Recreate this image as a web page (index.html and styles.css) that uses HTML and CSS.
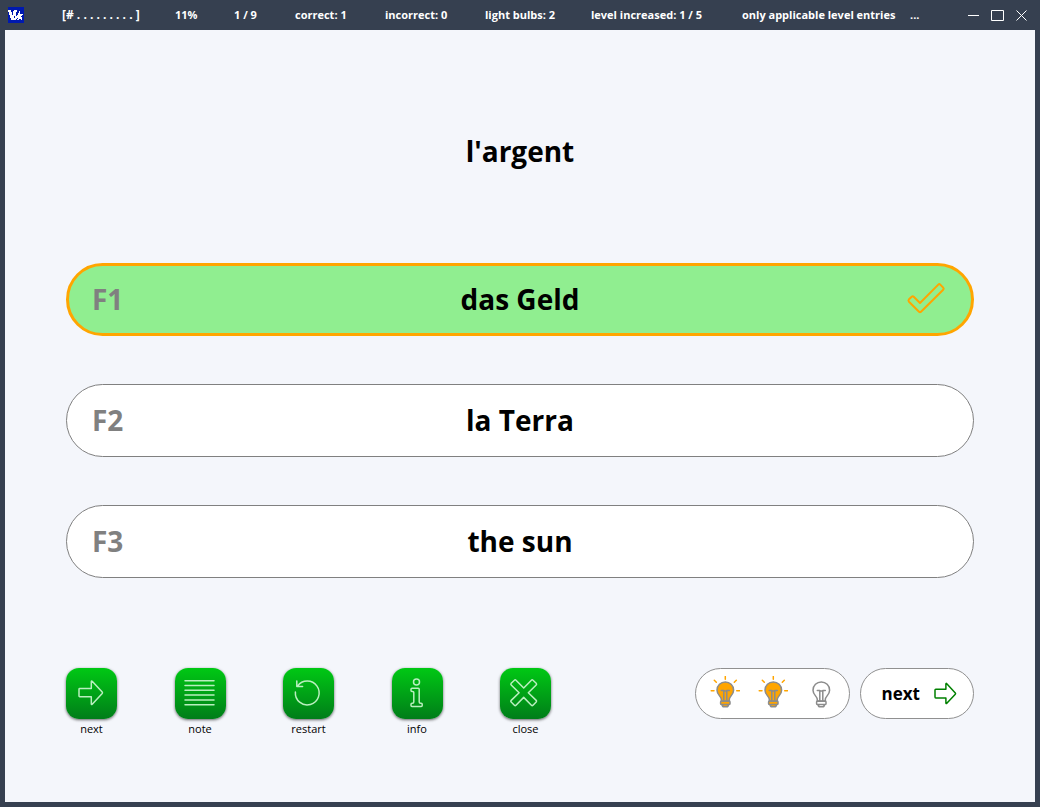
FILE: index.html
```html
<!DOCTYPE html>
<html lang="en">
<head>
<meta charset="utf-8">
<title>Vocabulary quiz</title>
<link rel="stylesheet" href="styles.css">
</head>
<body>
<div class="window">
  <header class="titlebar">
    <svg class="app-icon" viewBox="0 0 16 16" aria-hidden="true">
      <rect width="16" height="16" fill="#0019b0"/>
      <path fill="#fff" d="M0 3h3v2h1v3h1V4h1V3h3v2H8v3h2V6h1V4h1v3h3v1h-1v1h-1v1h1v3h-1v-1h-2v1H9v-1H8v1H3v-2H2V8H1V5H0z"/>
      <path fill="#0019b0" d="M6 9h1v2H6zM8 8h1v1H8zM9 11h1v1H9z"/>
    </svg>
    <div class="status">
      <span class="progress">[# . . . . . . . . . ]</span>
      <span>11%</span>
      <span>1 / 9</span>
      <span>correct: 1</span>
      <span>incorrect: 0</span>
      <span>light bulbs: 2</span>
      <span>level increased: 1 / 5</span>
      <span>only applicable level entries</span>
      <span>...</span>
    </div>
    <div class="controls">
      <button class="control" type="button" aria-label="Minimize"><svg viewBox="0 0 14 14"><path d="M1 7.500h11"/></svg></button>
      <button class="control" type="button" aria-label="Maximize"><svg viewBox="0 0 14 14"><path d="M.5 2.500h12v10H.5z"/></svg></button>
      <button class="control" type="button" aria-label="Close window"><svg viewBox="0 0 14 14"><path d="M1.500 2.500l10 10M11.500 2.500l-10 10"/></svg></button>
    </div>
  </header>

  <main class="quiz">
    <h1 class="prompt">l'argent</h1>

    <div class="answers">
      <button class="answer correct" type="button">
        <span class="key">F1</span>
        <span class="word">das Geld</span>
        <svg class="check" viewBox="0 0 44 40" aria-hidden="true"><path d="M5 20.300L7.700 17.700Q8.700 16.800 9.700 17.700L16 24L34.300 5.600Q35.300 4.600 36.300 5.600L39.200 8.600Q40.200 9.700 39.200 10.700L17 32.700Q16 33.600 15 32.700L5 22.700Q3.900 21.500 5 20.300z"/></svg>
      </button>
      <button class="answer" type="button">
        <span class="key">F2</span>
        <span class="word">la Terra</span>
      </button>
      <button class="answer" type="button">
        <span class="key">F3</span>
        <span class="word">the sun</span>
      </button>
    </div>

    <footer class="footer">
      <div class="tools">
        <button class="tool" type="button">
          <svg class="tile" viewBox="0 0 51 51"><path d="M13 21.200Q13 20.500 13.700 20.500H25.300V13.600Q25.300 12.400 26.200 13.300L36.200 24.100Q36.800 24.800 36.200 25.500L26.200 36.200Q25.300 37 25.300 36V28.700H13.700Q13 28.700 13 28z"/></svg>
          <span>next</span>
        </button>
        <button class="tool" type="button">
          <svg class="tile" viewBox="0 0 51 51"><path d="M10 12.700h29M10 17.500h29M10 22.300h29M10 27.100h29M10 31.900h29M10 36.700h29"/></svg>
          <span>note</span>
        </button>
        <button class="tool" type="button">
          <svg class="tile" viewBox="0 0 51 51"><path d="M12.400 24A11.900 11.900 0 1 0 14.500 18.200M13.800 12.900V18.600H19.600"/></svg>
          <span>restart</span>
        </button>
        <button class="tool" type="button">
          <svg class="tile" viewBox="0 0 51 51"><circle cx="24.500" cy="14" r="3"/><path d="M20 20.300H26.200Q27.200 20.300 27.200 21.300V34Q27.200 35.200 28.500 35.200H29.200Q30.200 35.200 30.200 36.200V37.500Q30.200 38.500 29.200 38.500H20Q19 38.500 19 37.500V36.200Q19 35.200 20 35.200H20.500Q21.800 35.200 21.800 34V24.600Q21.800 23.500 20.700 23.500H20Q19 23.500 19 22.500V21.300Q19 20.300 20 20.300z"/></svg>
          <span>info</span>
        </button>
        <button class="tool" type="button">
          <svg class="tile" viewBox="0 0 51 51"><path d="M14.400 12.200Q15.200 11.400 16 12.200L23.700 20L31.400 12.200Q32.200 11.400 33 12.200L36.200 15.300Q37 16.200 36.200 17L28.300 24.700L36.200 32.400Q37 33.200 36.200 34L33 37.200Q32.200 38 31.400 37.200L23.700 29.400L16 37.200Q15.200 38 14.400 37.200L11.200 34Q10.400 33.200 11.200 32.400L19.100 24.700L11.200 17Q10.400 16.200 11.200 15.300z"/></svg>
          <span>close</span>
        </button>
      </div>

      <div class="actions">
        <div class="bulbs" role="img" aria-label="2 of 3 light bulbs">
          <svg class="bulb lit" viewBox="0 0 30 32"><use href="#rays"/><use href="#bulb"/></svg>
          <svg class="bulb lit" viewBox="0 0 30 32"><use href="#rays"/><use href="#bulb"/></svg>
          <svg class="bulb" viewBox="0 0 30 32"><use href="#bulb"/></svg>
        </div>
        <button class="next" type="button">
          <span>next</span>
          <svg viewBox="0 0 23 23" aria-hidden="true"><path d="M1 8Q1 7.200 1.800 7.200H11.900V2Q11.900.9 12.800 1.700L21.300 10.900Q21.900 11.600 21.300 12.200L12.800 21.300Q11.900 22 11.900 21V15.900H1.800Q1 15.900 1 15.100z"/></svg>
        </button>
      </div>
    </footer>
  </main>
</div>

<svg class="defs" width="0" height="0" aria-hidden="true">
  <defs>
    <g id="rays"><path class="ray" d="M15.300.5v2.800M1.200 14.700h2.800M26.700 14.700h2.800M4.300 4.200l2 2M26.300 4.200l-2 2"/></g>
    <g id="bulb">
      <path d="M11.300 25V23.400C11.300 20.300 7 19 7 14.200A8.300 8.300 0 0 1 23.600 14.200C23.600 19 19.300 20.300 19.300 23.400V25z"/>
      <path fill="none" d="M13.800 25V14.800M16.800 25V14.800M11.300 14.600H13.800Q15.300 15.600 16.800 14.600H19.300"/>
      <path d="M11.200 25.300H19.400Q20 25.300 20 26V27.800Q20 28.400 19.400 28.400H11.200Q10.600 28.400 10.600 27.800V26Q10.600 25.300 11.200 25.300zM12 28.500Q12.400 30.800 14 30.800H16.600Q18.200 30.800 18.600 28.500"/>
    </g>
  </defs>
</svg>
</body>
</html>
```

FILE: styles.css
```css
* {
  box-sizing: border-box;
}

body {
  margin: 0;
  font-family: "Open Sans", "Noto Sans", sans-serif;
  color: #000;
}

button {
  font: inherit;
  color: inherit;
  border: 0;
  padding: 0;
  background: none;
  cursor: pointer;
}

svg {
  display: block;
  fill: none;
  stroke-linecap: round;
  stroke-linejoin: round;
}

.defs {
  position: absolute;
}

.window {
  display: flex;
  flex-direction: column;
  min-height: 100vh;
  padding: 0 5px 5px;
  background: #364050;
}

.titlebar {
  display: flex;
  align-items: center;
  height: 30px;
  padding: 0 6px 0 3px;
  color: #fff;
}

.app-icon {
  width: 16px;
  height: 16px;
  margin-right: 38px;
  shape-rendering: crispEdges;
}

.status {
  display: grid;
  flex: 1;
  grid-template-columns: 113px 59px 61px 90px 100px 106px 151px 168px 1fr;
  min-width: 0;
  overflow: hidden;
  font-size: 11px;
  font-weight: 700;
  line-height: 16px;
  white-space: nowrap;
}

.progress {
  font-size: 12px;
}

.controls {
  display: flex;
  gap: 10px;
}

.control svg {
  width: 14px;
  height: 14px;
  stroke: #fff;
  stroke-linecap: butt;
}

.quiz {
  display: flex;
  flex: 1;
  flex-direction: column;
  padding: 0 61px;
  background: #f4f6fb;
}

.prompt {
  margin: 100px 0 91px;
  font-size: 28px;
  font-weight: 700;
  line-height: 42px;
  text-align: center;
}

.answers {
  display: grid;
  gap: 48px;
}

.answer {
  display: grid;
  grid-template-columns: 66px 1fr 66px;
  align-items: center;
  height: 73px;
  padding: 0 25px 2px;
  border: 1px solid #808080;
  border-radius: 37px;
  background: #fff;
  font-size: 28px;
  font-weight: 700;
  line-height: 42px;
}

.answer.correct {
  padding: 0 23px 2px;
  border: 3px solid #ffa500;
  background: #90ee90;
}

.key {
  color: #808080;
  text-align: left;
}

.check {
  width: 44px;
  height: 40px;
  justify-self: end;
  stroke: #ffa500;
  stroke-width: 2;
}

.footer {
  display: flex;
  align-items: flex-start;
  justify-content: space-between;
  margin: 90px 0 64px;
}

.tools {
  display: flex;
  flex: 0 1 485px;
  justify-content: space-between;
}

.tool {
  display: flex;
  flex-direction: column;
  align-items: center;
  gap: 2px;
  width: 51px;
  font-size: 11px;
  line-height: 16px;
}

.tile {
  width: 51px;
  height: 51px;
  border-radius: 13px;
  background: linear-gradient(#00c814, #007d19);
  box-shadow: 0 1px 3px #00000099;
  stroke: #b9efbf;
  stroke-width: 1.5;
}

.actions {
  display: flex;
  gap: 10px;
}

.bulbs,
.next {
  display: flex;
  align-items: center;
  height: 51px;
  border: 1px solid #909090;
  border-radius: 26px;
  background: #fff;
}

.bulbs {
  gap: 18px;
  padding: 0 13px 4px 14px;
}

.bulb {
  width: 30px;
  height: 32px;
  stroke: #8c8c8c;
  stroke-width: 1.5;
}

.bulb.lit {
  fill: #ffa500;
}

.ray {
  stroke: #ffa500;
}

.next {
  gap: 14px;
  padding: 0 16px 0 21px;
  font-size: 17px;
  font-weight: 700;
  line-height: 24px;
}

.next svg {
  width: 23px;
  height: 23px;
  stroke: #008000;
  stroke-width: 1.5;
}
```
